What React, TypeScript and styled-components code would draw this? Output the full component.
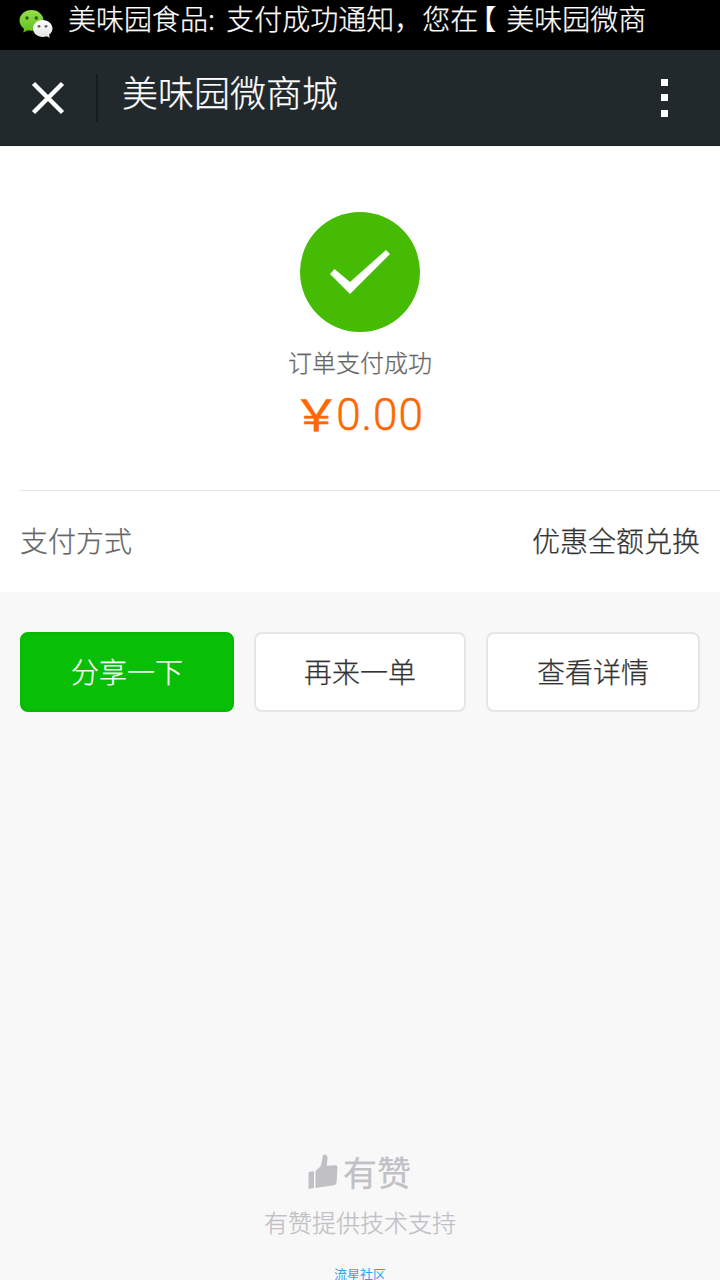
import React from "react";
import styled, { createGlobalStyle } from "styled-components";

const GlobalStyle = createGlobalStyle`
  * { box-sizing: border-box; }
  body {
    margin: 0;
    background: #f8f8f8;
    font-family: "Noto Sans CJK SC", sans-serif;
    font-weight: 300;
  }
`;

const Screen = styled.div`
  width: 720px;
  height: 1280px;
  overflow: hidden;
  display: flex;
  flex-direction: column;
  background: #f8f8f8;
  -webkit-text-stroke: 0.25px currentColor;
`;

const StatusBar = styled.div`
  height: 50px;
  flex: none;
  display: flex;
  background: #000;
  color: #fff;
  padding-left: 18px;
`;

const WeChatLogo = styled.svg`
  width: 36px;
  height: 32px;
  margin-top: 8px;
  flex: none;
`;

const Ticker = styled.div`
  height: 42px;
  margin-left: 14px;
  font-size: 28px;
  line-height: 36px;
  word-spacing: 5px;
  white-space: nowrap;
`;

const Bracket = styled.span`
  font-feature-settings: "halt";
  padding: 0 10px 0 4px;
`;

const NavBar = styled.header`
  height: 96px;
  flex: none;
  display: flex;
  align-items: center;
  background: #22292c;
  border-bottom: 1px solid #1b1f22;
  color: #fff;
`;

const CloseIcon = styled.svg`
  width: 96px;
  height: 96px;
`;

const Divider = styled.div`
  width: 2px;
  height: 48px;
  background: #161b1c;
`;

const NavTitle = styled.h1`
  flex: 1;
  margin: 0 0 14px 24px;
  font-size: 36px;
  line-height: 48px;
  font-weight: 300;
`;

const MoreDots = styled.div`
  width: 8px;
  margin-right: 52px;
  display: flex;
  flex-direction: column;
  align-items: center;
  gap: 8.5px;
`;

const Dot = styled.span`
  width: 7px;
  height: 7px;
  background: #fff;
`;

const Result = styled.section`
  height: 344px;
  flex: none;
  background: #fff;
  display: flex;
  flex-direction: column;
  align-items: center;
  padding-top: 66px;
`;

const SuccessIcon = styled.svg`
  width: 120px;
  height: 120px;
`;

const ResultText = styled.p`
  margin: 12px 0 0;
  font-size: 24px;
  line-height: 36px;
  color: #666;
`;

const Amount = styled.div`
  margin-top: 8px;
  display: flex;
  align-items: center;
  height: 54px;
  padding-left: 5px;
  color: #f60;
  font-family: Roboto, "Noto Sans CJK SC", sans-serif;
  font-size: 44px;
  font-weight: 300;
  letter-spacing: 1px;
  -webkit-text-stroke: 0.5px #f60;
`;

const Currency = styled.span`
  font-family: "Noto Sans CJK SC", sans-serif;
  font-size: 43px;
  line-height: 50px;
  font-weight: 400;
  letter-spacing: 0;
  width: 35px;
  margin-bottom: 7px;
  display: flex;
  justify-content: center;
  transform: scaleX(1.13);
  transform-origin: 100% 50%;
`;

const MethodPanel = styled.section`
  flex: none;
  background: #fff;
  padding-left: 20px;
`;

const MethodRow = styled.div`
  height: 102px;
  border-top: 1px solid #e5e5e5;
  padding: 0 20px 3px 0;
  display: flex;
  align-items: center;
  justify-content: space-between;
  font-size: 28px;
`;

const MethodText = styled.span<{ $color: string }>`
  color: ${(p) => p.$color};
`;

const Actions = styled.div`
  display: grid;
  grid-template-columns: 214px 212px 214px;
  gap: 20px;
  padding: 40px 20px 0;
`;

const Button = styled.button<{ $primary?: boolean }>`
  height: 80px;
  padding: 0 0 3px;
  border-radius: 8px;
  border: 2px solid ${(p) => (p.$primary ? "#08b704" : "#e5e5e5")};
  background: ${(p) => (p.$primary ? "#09bf05" : "#fff")};
  color: ${(p) => (p.$primary ? "#fff" : "#333")};
  font-family: inherit;
  font-size: 28px;
  font-weight: 300;
`;

const Footer = styled.footer`
  margin-top: auto;
  height: 132px;
  flex: none;
  display: flex;
  flex-direction: column;
  align-items: center;
  color: #c0c0c5;
`;

const Brand = styled.div`
  height: 48px;
  display: flex;
  align-items: center;
  gap: 5px;
  padding-right: 1px;
  font-size: 34px;
  font-weight: 400;
  line-height: 48px;
`;

const ThumbIcon = styled.svg`
  width: 30px;
  height: 36px;
`;

const Support = styled.p`
  margin: 8px 0 0;
  font-size: 24px;
  line-height: 36px;
`;

const Community = styled.a`
  margin-top: 25px;
  font-size: 13px;
  line-height: 18px;
  font-weight: 400;
  color: #2ea3f2;
  -webkit-text-stroke: 0;
`;

export default function App() {
  return (
    <Screen>
      <GlobalStyle />
      <StatusBar>
        <WeChatLogo viewBox="0 0 36 32">
          <defs>
            <linearGradient id="green" x1="0" y1="0" x2="0" y2="1">
              <stop offset="0" stopColor="#95e04b" />
              <stop offset="1" stopColor="#5fbf1d" />
            </linearGradient>
            <linearGradient id="white" x1="0" y1="0" x2="0" y2="1">
              <stop offset="0" stopColor="#fff" />
              <stop offset="1" stopColor="#dfe4e6" />
            </linearGradient>
          </defs>
          <path
            d="M13.500 2C6.800 2 1.500 6.700 1.500 12.600c0 3.200 1.700 6.200 4.500 8.200L5.300 24.500l4.400-2.200c1.200.3 2.500.5 3.800.5 6.700 0 12-4.500 12-10.200S20.200 2 13.500 2z"
            fill="url(#green)"
          />
          <circle cx="9" cy="10" r="1.700" fill="#2c5a12" />
          <circle cx="18.300" cy="10" r="1.700" fill="#2c5a12" />
          <path
            d="M24.700 12c-5.400 0-9.700 3.700-9.700 8.500s4.300 8.500 9.700 8.500c1.400 0 2.700-.2 3.900-.7l3.200 1.500-.7-3.100c2.100-1.600 3.400-3.700 3.400-6.200 0-4.800-4.400-8.500-9.800-8.500z"
            fill="url(#white)"
          />
          <circle cx="21" cy="18.300" r="1.400" fill="#5b6265" />
          <circle cx="28" cy="18.300" r="1.400" fill="#5b6265" />
        </WeChatLogo>
        <Ticker>
          美味园食品: 支付成功通知，您在<Bracket>【</Bracket>美味园微商
        </Ticker>
      </StatusBar>
      <NavBar>
        <CloseIcon viewBox="0 0 96 96">
          <path d="M33.500 33.500 62.500 62.500M62.500 33.500 33.500 62.500" stroke="#fff" strokeWidth="4.500" fill="none" />
        </CloseIcon>
        <Divider />
        <NavTitle>美味园微商城</NavTitle>
        <MoreDots>
          <Dot />
          <Dot />
          <Dot />
        </MoreDots>
      </NavBar>
      <Result>
        <SuccessIcon viewBox="0 0 120 120">
          <circle cx="60" cy="60" r="60" fill="#45bc03" />
          <path d="M30 62 34.500 57 50 70 86 38 90 42 50 82z" fill="#fff" />
        </SuccessIcon>
        <ResultText>订单支付成功</ResultText>
        <Amount>
          <Currency>￥</Currency>0.00
        </Amount>
      </Result>
      <MethodPanel>
        <MethodRow>
          <MethodText $color="#666">支付方式</MethodText>
          <MethodText $color="#333">优惠全额兑换</MethodText>
        </MethodRow>
      </MethodPanel>
      <Actions>
        <Button $primary>分享一下</Button>
        <Button>再来一单</Button>
        <Button>查看详情</Button>
      </Actions>
      <Footer>
        <Brand>
          <ThumbIcon viewBox="0 0 30 36">
            <path d="M.5 19Q.5 18 1.500 17.800L6 17.200V34L.5 35z" fill="#c0c0c5" />
            <path
              d="M7.500 17 12.500 12.500Q14.200 8 14.500 2.500 15 .5 17 .6 19.800 1 19.500 5L18.700 11.800 27.500 11.300Q29.700 11.300 29.500 13.500L28.600 28.500Q28.300 31 26 31.300L7.500 34z"
              fill="#c0c0c5"
            />
          </ThumbIcon>
          有赞
        </Brand>
        <Support>有赞提供技术支持</Support>
        <Community>流星社区</Community>
      </Footer>
    </Screen>
  );
}
